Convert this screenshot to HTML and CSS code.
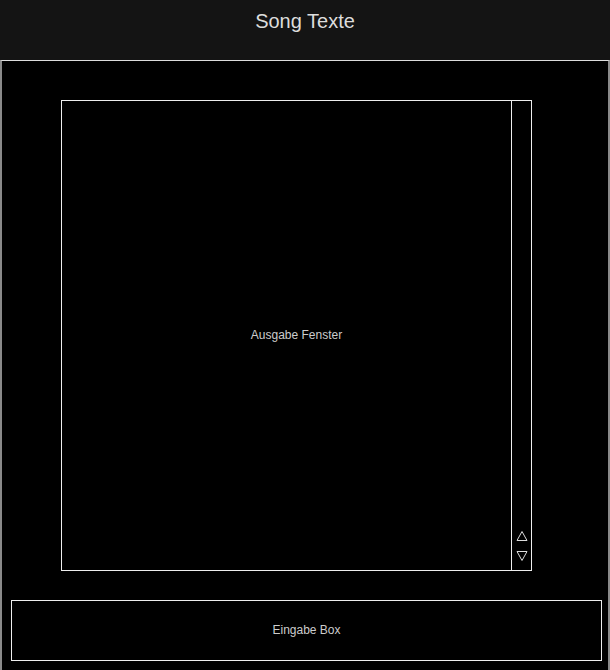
FILE: index.html
```html
<!DOCTYPE html>
<html lang="de">
<head>
<meta charset="utf-8">
<title>Song Texte</title>
<link rel="stylesheet" href="styles.css">
</head>
<body>
<header class="topbar">
  <h1 class="title">Song Texte</h1>
</header>
<main class="stage">
  <section class="output">
    <div class="output-text">Ausgabe Fenster</div>
    <div class="scroller">
      <svg class="arrow" width="12" height="12" viewBox="0 0 12 12"><path d="M6 1.5 L11 10.5 L1 10.5 Z" fill="none" stroke="#ddd" stroke-width="1"/></svg>
      <svg class="arrow" width="12" height="12" viewBox="0 0 12 12"><path d="M1 1.5 L11 1.5 L6 10.5 Z" fill="none" stroke="#ddd" stroke-width="1"/></svg>
    </div>
  </section>
  <section class="input">Eingabe Box</section>
</main>
</body>
</html>
```
FILE: styles.css
```css
html, body {
  margin: 0;
  padding: 0;
  background: #000;
  height: 100%;
  overflow: hidden;
}
body {
  font-family: "Liberation Sans", Arial, sans-serif;
  color: #ccc;
}
.topbar {
  height: 60px;
  background: #141414;
  box-sizing: border-box;
  padding-top: 9px;
  text-align: center;
}
.title {
  margin: 0;
  font-size: 20px;
  line-height: 24px;
  font-weight: normal;
  color: #ddd;
}
.stage {
  border-top: 1px solid #ddd;
  border-left: 2px solid #8a8a8a;
  border-right: 2px solid #8a8a8a;
  background: #000;
  height: 610px;
  padding-top: 39px;
  box-sizing: border-box;
}
.output {
  margin-left: 59px;
  width: 471px;
  height: 471px;
  box-sizing: border-box;
  border: 1px solid #eee;
  display: grid;
  grid-template-columns: 1fr 20px;
}
.output-text {
  display: flex;
  align-items: center;
  justify-content: center;
  padding-left: 20px;
  padding-bottom: 2px;
  font-size: 12px;
}
.scroller {
  border-left: 1px solid #eee;
  display: flex;
  flex-direction: column;
  justify-content: flex-end;
  align-items: center;
  gap: 8px;
  padding-bottom: 8px;
}
.arrow {
  display: block;
}
.input {
  margin: 29px 0 0 9px;
  width: 591px;
  height: 61px;
  box-sizing: border-box;
  border: 1px solid #eee;
  display: flex;
  align-items: center;
  justify-content: center;
  padding-bottom: 2px;
  font-size: 12px;
}
```
